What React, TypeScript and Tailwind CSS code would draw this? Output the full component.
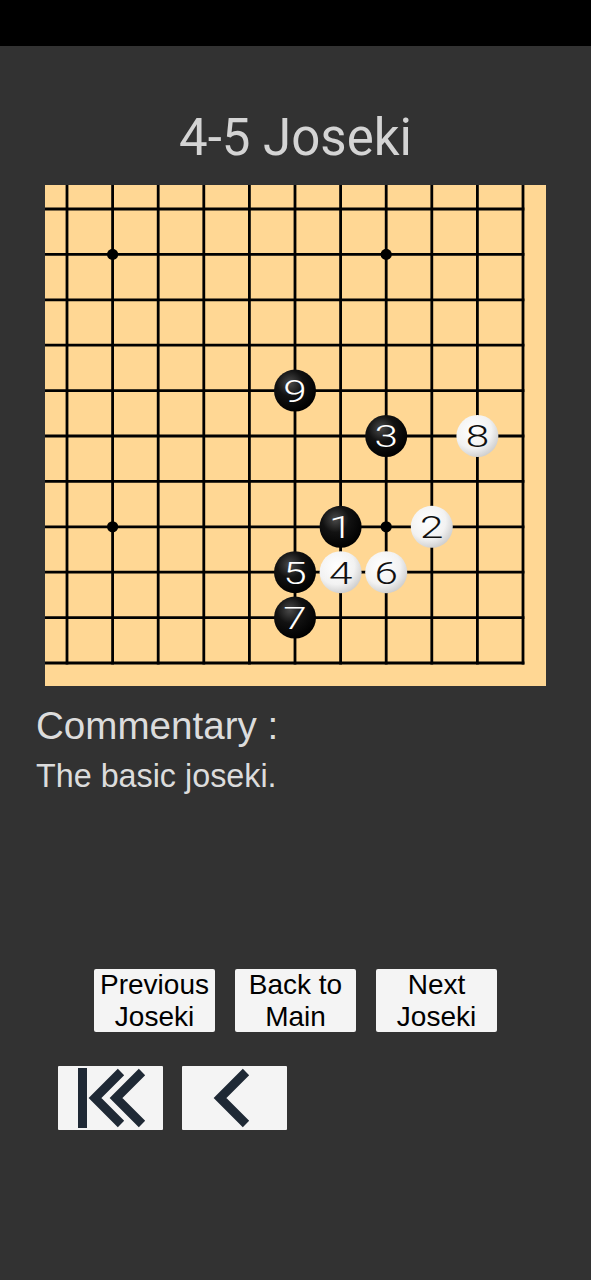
import React from "react";

const SP_X = 45.6;
const SP_Y = 45.4;
const X0 = 22;
const Y0 = 24;

type Stone = { c: number; r: number; n: number; black: boolean };

const stones: Stone[] = [
  { c: 6, r: 7, n: 1, black: true },
  { c: 8, r: 7, n: 2, black: false },
  { c: 7, r: 5, n: 3, black: true },
  { c: 6, r: 8, n: 4, black: false },
  { c: 5, r: 8, n: 5, black: true },
  { c: 7, r: 8, n: 6, black: false },
  { c: 5, r: 9, n: 7, black: true },
  { c: 9, r: 5, n: 8, black: false },
  { c: 5, r: 4, n: 9, black: true },
];

const stars = [
  [1, 1],
  [7, 1],
  [1, 7],
  [7, 7],
];

function Board() {
  const idx = Array.from({ length: 11 }, (_, i) => i);
  const xEnd = X0 + 10 * SP_X;
  const yEnd = Y0 + 10 * SP_Y;
  return (
    <svg width="501" height="501" viewBox="0 0 501 501" className="block">
      <defs>
        <radialGradient id="bg" cx="0.38" cy="0.32" r="0.7">
          <stop offset="0%" stopColor="#4a4a4a" />
          <stop offset="45%" stopColor="#121212" />
          <stop offset="100%" stopColor="#000000" />
        </radialGradient>
        <radialGradient id="wg" cx="0.4" cy="0.36" r="0.72">
          <stop offset="0%" stopColor="#ffffff" />
          <stop offset="60%" stopColor="#f2f2f2" />
          <stop offset="100%" stopColor="#c6c6c6" />
        </radialGradient>
      </defs>
      <rect x="0" y="0" width="501" height="501" fill="#ffd794" />
      {idx.map((i) => (
        <line
          key={"v" + i}
          x1={X0 + i * SP_X}
          y1={0}
          x2={X0 + i * SP_X}
          y2={yEnd + 1.4}
          stroke="#000"
          strokeWidth={2.8}
        />
      ))}
      {idx.map((i) => (
        <line
          key={"h" + i}
          x1={0}
          y1={Y0 + i * SP_Y}
          x2={xEnd + 1.4}
          y2={Y0 + i * SP_Y}
          stroke="#000"
          strokeWidth={2.8}
        />
      ))}
      {stars.map(([c, r]) => (
        <circle key={`s${c}-${r}`} cx={X0 + c * SP_X} cy={Y0 + r * SP_Y} r={5.6} fill="#000" />
      ))}
      {stones.map((s) => {
        const cx = X0 + s.c * SP_X;
        const cy = Y0 + s.r * SP_Y;
        return (
          <g key={s.n}>
            <circle cx={cx} cy={cy} r={21} fill={s.black ? "url(#bg)" : "url(#wg)"} />
            <text
              transform={`translate(${cx} ${cy + 11.4}) scale(1.32 1)`}
              textAnchor="middle"
              fontSize={32}
              fontWeight={300}
              fontFamily="Roboto, 'Liberation Sans', sans-serif"
              fill={s.black ? "#ffffff" : "#111111"}
            >
              {s.n}
            </text>
          </g>
        );
      })}
    </svg>
  );
}

function FirstIcon() {
  return (
    <svg width="105" height="64" viewBox="0 0 105 64" className="block">
      <rect x="20" y="2" width="9" height="60" fill="#1f2935" />
      <polyline
        points="63,6 37,32 63,58"
        fill="none"
        stroke="#1f2935"
        strokeWidth={9}
        strokeLinecap="butt"
        strokeLinejoin="miter"
      />
      <polyline
        points="84,6 58,32 84,58"
        fill="none"
        stroke="#1f2935"
        strokeWidth={9}
        strokeLinecap="butt"
        strokeLinejoin="miter"
      />
    </svg>
  );
}

function PrevIcon() {
  return (
    <svg width="105" height="64" viewBox="0 0 105 64" className="block">
      <polyline
        points="64,6 38,32 64,58"
        fill="none"
        stroke="#1f2935"
        strokeWidth={9}
        strokeLinecap="butt"
        strokeLinejoin="miter"
      />
    </svg>
  );
}

function TextButton({ l1, l2 }: { l1: string; l2: string }) {
  return (
    <div className="w-[121px] h-[63px] bg-[#f4f4f4] rounded-[2px] flex flex-col items-center text-black text-[28px] leading-[32px] font-['Liberation_Sans',Arial,sans-serif]">
      <span className="whitespace-nowrap">{l1}</span>
      <span className="whitespace-nowrap">{l2}</span>
    </div>
  );
}

export default function App() {
  return (
    <div className="w-[591px] h-[1280px] bg-[#323232] overflow-hidden">
      <div className="h-[46px] bg-black" />
      <div className="mt-[62px] h-[60px] leading-[60px] text-center text-[51px] text-[#d4d4d4] font-['Roboto',sans-serif]">
        4-5 Joseki
      </div>
      <div className="mt-[17px] mx-auto w-[501px] h-[501px]">
        <Board />
      </div>
      <div className="mt-[18px] pl-[36px] font-['Liberation_Sans',Arial,sans-serif] text-[#dcdcdc]">
        <div className="text-[38.6px] leading-[44px]">Commentary :</div>
        <div className="mt-[10px] text-[32.3px] leading-[36px]">The basic joseki.</div>
      </div>
      <div className="mt-[175px] flex justify-center gap-[20px]">
        <TextButton l1="Previous" l2="Joseki" />
        <TextButton l1="Back to" l2="Main" />
        <TextButton l1="Next" l2="Joseki" />
      </div>
      <div className="mt-[34px] pl-[58px] flex gap-[19px]">
        <div className="w-[105px] h-[64px] bg-[#f4f4f4] rounded-[1px]">
          <FirstIcon />
        </div>
        <div className="w-[105px] h-[64px] bg-[#f4f4f4] rounded-[1px]">
          <PrevIcon />
        </div>
      </div>
    </div>
  );
}
